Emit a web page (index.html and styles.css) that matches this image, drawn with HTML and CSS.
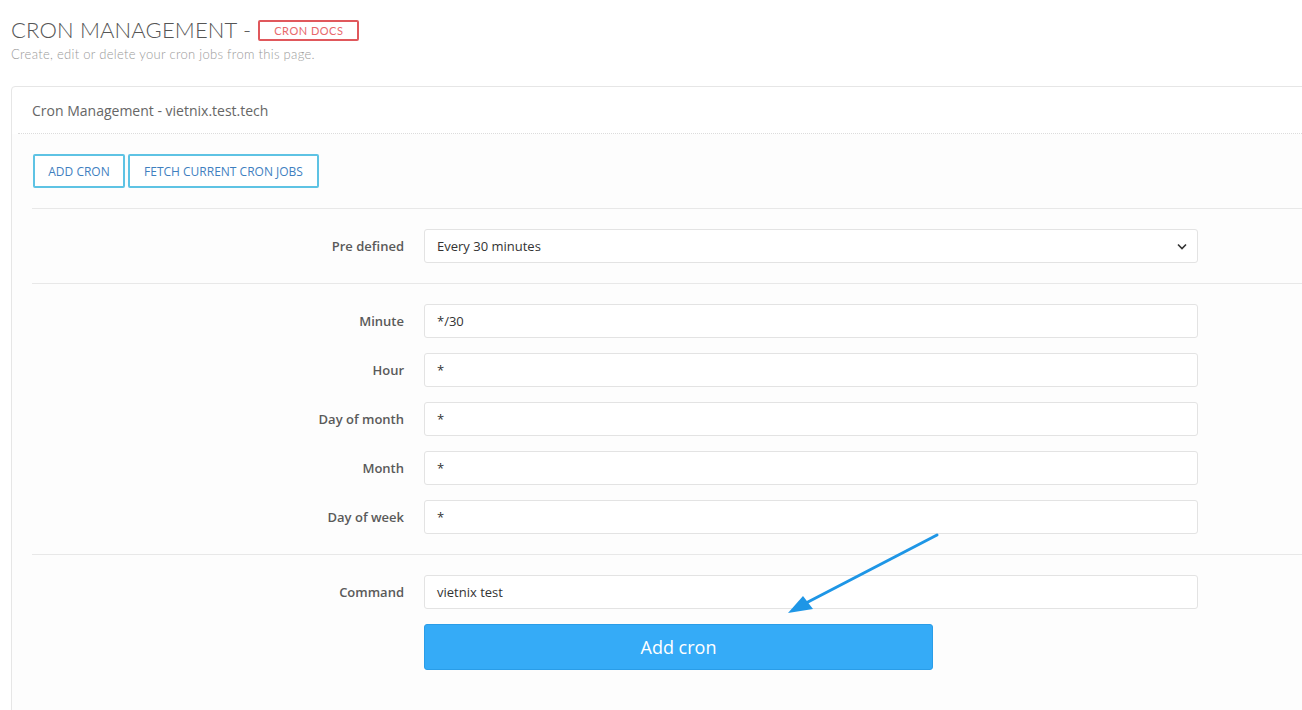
FILE: index.html
```html
<!DOCTYPE html>
<html>
<head>
<meta charset="utf-8">
<link rel="stylesheet" href="styles.css">
</head>
<body>
<div class="page">
  <div class="page-head">
    <h1 class="title">CRON MANAGEMENT - <span class="badge">CRON DOCS</span></h1>
    <p class="subtitle">Create, edit or delete your cron jobs from this page.</p>
  </div>
  <div class="card">
    <div class="card-head">Cron Management - vietnix.test.tech</div>
    <div class="card-body">
      <div class="actions">
        <button class="btn-outline btn-add">ADD CRON</button>
        <button class="btn-outline btn-fetch">FETCH CURRENT CRON JOBS</button>
      </div>
      <div class="section">
        <div class="row">
          <label class="label">Pre defined</label>
          <div class="select">
            <span>Every 30 minutes</span>
            <svg class="chev" width="10" height="7" viewBox="0 0 10 7"><path d="M1 1.5 L5 5.5 L9 1.5" fill="none" stroke="#333" stroke-width="1.6"/></svg>
          </div>
        </div>
      </div>
      <div class="section">
        <div class="row"><label class="label">Minute</label><div class="input">*/30</div></div>
        <div class="row"><label class="label">Hour</label><div class="input">*</div></div>
        <div class="row"><label class="label">Day of month</label><div class="input">*</div></div>
        <div class="row"><label class="label">Month</label><div class="input">*</div></div>
        <div class="row"><label class="label">Day of week</label><div class="input">*</div></div>
      </div>
      <div class="section last">
        <div class="row"><label class="label">Command</label><div class="input">vietnix test</div></div>
        <div class="row btn-row"><span></span><button class="btn-primary">Add cron</button></div>
      </div>
    </div>
  </div>
  <svg class="arrow" width="1302" height="710" viewBox="0 0 1302 710">
    <line x1="937" y1="535" x2="806" y2="603" stroke="#1e96e6" stroke-width="3" stroke-linecap="round"/>
    <polygon points="788,613 803,596 813,609" fill="#1e96e6"/>
  </svg>
</div>
</body>
</html>
```
FILE: styles.css
```css
html, body {
  margin: 0;
  padding: 0;
  background: #fff;
  overflow: hidden;
}
.page {
  position: relative;
  width: 1302px;
  height: 710px;
  overflow: hidden;
  padding: 0 0 0 11px;
  box-sizing: border-box;
  font-family: "Open Sans", sans-serif;
}
.page-head {
  padding-top: 16px;
  height: 86px;
  box-sizing: border-box;
}
.title {
  margin: 0;
  font-family: Lato, "Open Sans", sans-serif;
  font-weight: 300;
  font-size: 22px;
  line-height: 28px;
  color: #555;
  letter-spacing: 0.15px;
  display: flex;
  align-items: center;
}
.badge {
  display: inline-block;
  margin-left: 7px;
  border: 2px solid #e0585c;
  border-radius: 2px;
  color: #e8686b;
  font-size: 11px;
  line-height: 17px;
  padding: 0 14px;
  font-family: Lato, sans-serif;
  font-weight: 400;
  letter-spacing: 0.5px;
}
.subtitle {
  margin: 2px 0 0;
  font-family: Lato, sans-serif;
  font-weight: 300;
  font-size: 13px;
  letter-spacing: 0.3px;
  color: #9a9a9a;
}
.card {
  width: 1320px;
  border: 1px solid #e6e6e6;
  border-radius: 4px;
  background: #fff;
  height: 640px;
}
.card-head {
  height: 46px;
  line-height: 48px;
  font-size: 14px;
  color: #666;
  border-bottom: 1px dotted #dcdcdc;
  margin-left: 6px;
  padding-left: 14px;
}
.card-body {
  background: #fdfdfd;
  padding: 20px 0 0 20px;
  height: 100%;
}
.actions {
  display: flex;
  gap: 3px;
  padding-bottom: 20px;
  border-bottom: 1px solid #e8e8e8;
}
.btn-outline {
  height: 34px;
  border: 2px solid #5ec3e4;
  border-radius: 2px;
  background: #fff;
  color: #3f7fbf;
  font-family: "Open Sans", sans-serif;
  font-size: 12px;
  padding: 0 12px;
  cursor: pointer;
}
.btn-add {
  width: 92px;
  margin-left: 1px;
}
.btn-fetch {
  width: 191px;
}
.section {
  padding: 20px 0;
  border-bottom: 1px solid #e8e8e8;
  display: flex;
  flex-direction: column;
  gap: 15px;
}
.section.last {
  border-bottom: none;
  gap: 15px;
}
.row {
  display: grid;
  grid-template-columns: 372px 774px;
  column-gap: 20px;
  align-items: center;
}
.label {
  text-align: right;
  font-size: 13px;
  font-weight: 600;
  color: #5a5a5a;
}
.input, .select {
  height: 34px;
  box-sizing: border-box;
  border: 1px solid #e3e3e3;
  border-radius: 3px;
  background: #fff;
  padding: 0 12px;
  font-size: 13px;
  color: #333;
  display: flex;
  align-items: center;
}
.select {
  justify-content: space-between;
  padding-right: 10px;
}
.btn-row {
  align-items: start;
}
.btn-primary {
  width: 509px;
  height: 46px;
  background: #35abf7;
  border: 1px solid #2a9de8;
  border-radius: 3px;
  color: #fff;
  font-family: "Open Sans", sans-serif;
  font-size: 18px;
}
.arrow {
  position: absolute;
  left: 0;
  top: 0;
  pointer-events: none;
}
```
